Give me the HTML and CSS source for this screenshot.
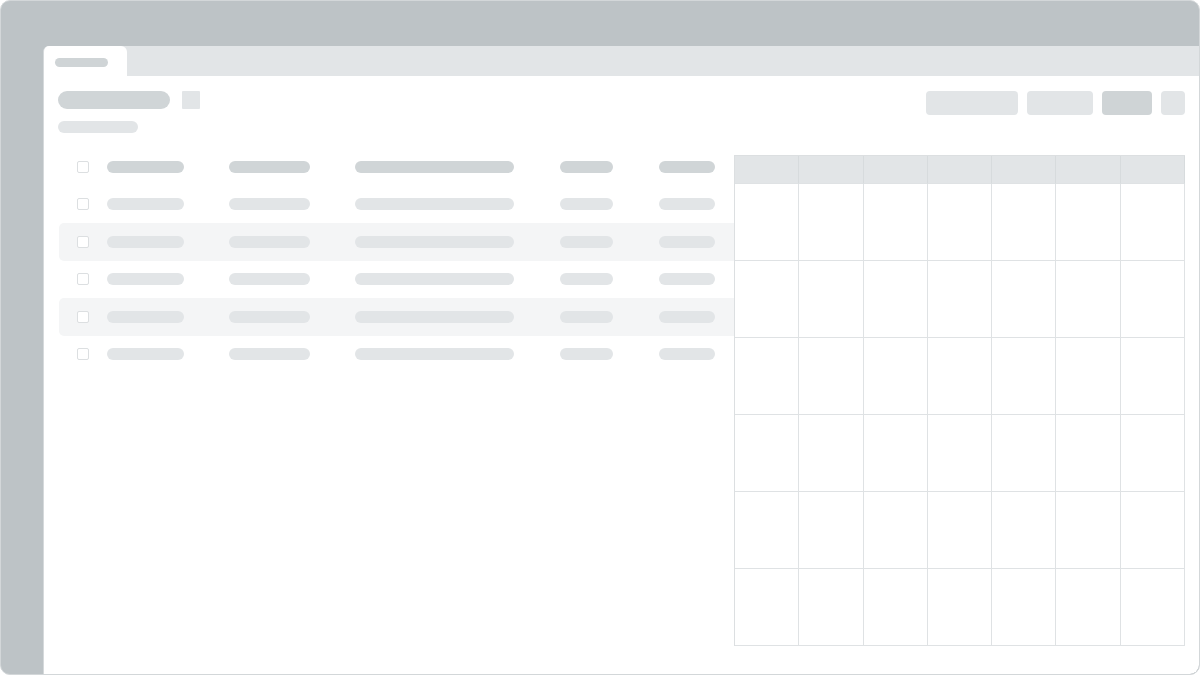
FILE: index.html
```
<!DOCTYPE html>
<html lang="en">

<head>
    <meta charset="UTF-8">
    <meta name="viewport" content="width=device-width, initial-scale=1.0">
    <title>Schedule</title>
    <link rel="stylesheet" href="styles.css">
</head>

<body>
    <div class="frame">
        <div class="panel">
            <div class="tab-bar">
                <div class="tab"><span class="pill tab-pill"></span></div>
            </div>

            <div class="content">
                <div class="header">
                    <div class="heading">
                        <div class="title-row">
                            <span class="pill title-pill"></span>
                            <span class="title-icon"></span>
                        </div>
                        <span class="pill sub-pill"></span>
                    </div>
                    <div class="actions">
                        <span class="btn btn-wide"></span>
                        <span class="btn btn-mid"></span>
                        <span class="btn btn-small dark"></span>
                        <span class="btn btn-icon"></span>
                    </div>
                </div>

                <div class="main">
                    <div class="list">
                        <div class="row head">
                            <span class="check"></span>
                            <div class="cells">
                                <span class="pill c1"></span>
                                <span class="pill c2"></span>
                                <span class="pill c3"></span>
                                <span class="pill c4"></span>
                                <span class="pill c5"></span>
                            </div>
                        </div>
                        <div class="row">
                            <span class="check"></span>
                            <div class="cells">
                                <span class="pill c1"></span>
                                <span class="pill c2"></span>
                                <span class="pill c3"></span>
                                <span class="pill c4"></span>
                                <span class="pill c5"></span>
                            </div>
                        </div>
                        <div class="row striped">
                            <span class="check"></span>
                            <div class="cells">
                                <span class="pill c1"></span>
                                <span class="pill c2"></span>
                                <span class="pill c3"></span>
                                <span class="pill c4"></span>
                                <span class="pill c5"></span>
                            </div>
                        </div>
                        <div class="row">
                            <span class="check"></span>
                            <div class="cells">
                                <span class="pill c1"></span>
                                <span class="pill c2"></span>
                                <span class="pill c3"></span>
                                <span class="pill c4"></span>
                                <span class="pill c5"></span>
                            </div>
                        </div>
                        <div class="row striped">
                            <span class="check"></span>
                            <div class="cells">
                                <span class="pill c1"></span>
                                <span class="pill c2"></span>
                                <span class="pill c3"></span>
                                <span class="pill c4"></span>
                                <span class="pill c5"></span>
                            </div>
                        </div>
                        <div class="row">
                            <span class="check"></span>
                            <div class="cells">
                                <span class="pill c1"></span>
                                <span class="pill c2"></span>
                                <span class="pill c3"></span>
                                <span class="pill c4"></span>
                                <span class="pill c5"></span>
                            </div>
                        </div>
                    </div>

                    <div class="calendar">
                        <div class="day-head"></div>
                        <div class="day-head"></div>
                        <div class="day-head"></div>
                        <div class="day-head"></div>
                        <div class="day-head"></div>
                        <div class="day-head"></div>
                        <div class="day-head"></div>

                        <div class="day"></div><div class="day"></div><div class="day"></div><div class="day"></div><div class="day"></div><div class="day"></div><div class="day"></div>
                        <div class="day"></div><div class="day"></div><div class="day"></div><div class="day"></div><div class="day"></div><div class="day"></div><div class="day"></div>
                        <div class="day"></div><div class="day"></div><div class="day"></div><div class="day"></div><div class="day"></div><div class="day"></div><div class="day"></div>
                        <div class="day"></div><div class="day"></div><div class="day"></div><div class="day"></div><div class="day"></div><div class="day"></div><div class="day"></div>
                        <div class="day"></div><div class="day"></div><div class="day"></div><div class="day"></div><div class="day"></div><div class="day"></div><div class="day"></div>
                        <div class="day"></div><div class="day"></div><div class="day"></div><div class="day"></div><div class="day"></div><div class="day"></div><div class="day"></div>
                    </div>
                </div>
            </div>
        </div>
    </div>
</body>

</html>
```

FILE: styles.css
```
/* General styling */
body {
    margin: 0;
    padding: 0;
    background: #fff;
    font-family: "Liberation Sans", Arial, sans-serif;
}

.frame {
    width: 1200px;
    height: 675px;
    box-sizing: border-box;
    padding: 45px 0 0 42px;
    background: #bdc3c6;
    border: 1px solid #d3d7d9;
    border-radius: 10px;
    overflow: hidden;
    display: flex;
}

.panel {
    flex: 1;
    display: flex;
    flex-direction: column;
    background: #fff;
    border-left: 1px solid #d5d9db;
    border-radius: 6px 0 9px 0;
    overflow: hidden;
}

/* Tabs */
.tab-bar {
    height: 30px;
    flex-shrink: 0;
    background: #e2e5e7;
    display: flex;
}

.tab {
    width: 83px;
    background: #fff;
    border-radius: 0 6px 0 0;
    padding: 12px 0 0 11px;
    box-sizing: border-box;
}

.pill {
    display: block;
    border-radius: 10px;
    background: #e2e5e7;
}

.tab-pill {
    width: 53px;
    height: 9px;
    background: #cfd4d6;
}

/* Content */
.content {
    padding: 15px 14px 0 14px;
}

.header {
    display: flex;
    justify-content: space-between;
    align-items: flex-start;
}

.title-row {
    display: flex;
    align-items: center;
    gap: 12px;
}

.title-pill {
    width: 112px;
    height: 18px;
    background: #d0d5d7;
}

.title-icon {
    width: 18px;
    height: 18px;
    background: #e2e5e7;
    border-radius: 1px;
}

.sub-pill {
    width: 80px;
    height: 12px;
    margin-top: 12px;
}

.actions {
    display: flex;
    gap: 9px;
}

.btn {
    height: 24px;
    border-radius: 4px;
    background: #e2e5e7;
}

.btn-wide {
    width: 92px;
}

.btn-mid {
    width: 66px;
}

.btn-small {
    width: 50px;
}

.btn-icon {
    width: 24px;
}

.btn.dark {
    background: #cfd4d6;
}

/* List + calendar */
.main {
    display: flex;
    margin-top: 15px;
}

.list {
    flex: 1;
    margin-left: 1px;
}

.row {
    height: 37.5px;
    display: flex;
    align-items: center;
    padding: 0 18px;
    border-radius: 5px 0 0 5px;
}

.row.striped {
    background: #f4f5f6;
}

.check {
    width: 10px;
    height: 10px;
    border: 1px solid #dcdfe1;
    border-radius: 2px;
    background: #fff;
    margin-right: 18px;
}

.cells {
    display: flex;
    align-items: center;
}

.cells .pill {
    height: 12px;
}

.row.head .pill {
    background: #d0d5d7;
}

.c1 { width: 77px; }
.c2 { width: 81px; margin-left: 45px; }
.c3 { width: 159px; margin-left: 45px; }
.c4 { width: 53px; margin-left: 46px; }
.c5 { width: 56px; margin-left: 46px; }

.calendar {
    width: 451px;
    height: 491px;
    margin-top: 7px;
    box-sizing: border-box;
    display: grid;
    grid-template-columns: repeat(7, 1fr);
    grid-template-rows: 28px repeat(6, 1fr);
    border-top: 1px solid #dcdfe1;
    border-left: 1px solid #dcdfe1;
}

.day-head,
.day {
    border-right: 1px solid #dfe2e4;
    border-bottom: 1px solid #dfe2e4;
}

.day-head {
    background: #e2e5e7;
    border-right-color: #d7dbdd;
}
```
